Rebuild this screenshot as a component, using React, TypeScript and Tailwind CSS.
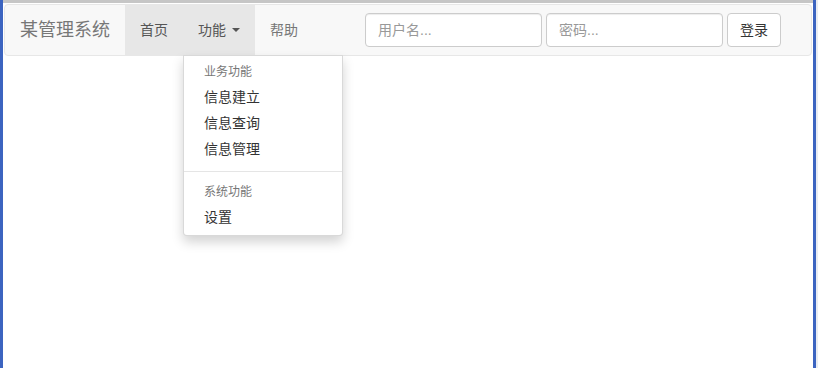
import React from "react";

const font = { fontFamily: '"Liberation Sans", "Noto Sans CJK SC", sans-serif' };

export default function App() {
  return (
    <div
      className="w-[818px] h-[368px] flex overflow-hidden bg-white text-[14px] leading-[20px] text-[#333]"
      style={font}
    >
      <div className="w-[3px] h-full bg-[#3c64c0] shrink-0" />
      <div className="flex-1 flex flex-col">
        <div className="h-[3px] bg-[#c6c6c6]" />
        <div className="flex-1 bg-white pt-[1px] px-[1px]">
          <nav className="relative h-[52px] flex items-stretch border border-[#e7e7e7] bg-[#f8f8f8] rounded-[4px]">
            <a className="h-[50px] px-[15px] py-[15px] text-[18px] leading-[20px] text-[#777]">
              某管理系统
            </a>
            <ul className="flex h-[50px]">
              <li>
                <a className="block h-[50px] px-[15px] py-[15px] bg-[#e7e7e7] text-[#555]">首页</a>
              </li>
              <li className="relative">
                <a className="flex items-center h-[50px] px-[15px] py-[15px] bg-[#e7e7e7] text-[#555]">
                  功能
                  <span className="ml-[6px] w-0 h-0 border-t-[4px] border-t-[#555] border-x-[4px] border-x-transparent" />
                </a>
                <div className="absolute left-0 top-[50px] w-[160px] py-[5px] bg-white border border-[rgba(0,0,0,0.15)] rounded-b-[4px] shadow-[0_6px_12px_rgba(0,0,0,0.175)] z-10">
                  <div className="px-[20px] py-[3px] text-[12px] leading-[17px] text-[#777]">业务功能</div>
                  <div className="px-[20px] py-[3px] text-[#333]">信息建立</div>
                  <div className="px-[20px] py-[3px] text-[#333]">信息查询</div>
                  <div className="px-[20px] py-[3px] text-[#333]">信息管理</div>
                  <div className="my-[9px] h-px bg-[#e5e5e5]" />
                  <div className="px-[20px] py-[3px] text-[12px] leading-[17px] text-[#777]">系统功能</div>
                  <div className="px-[20px] py-[3px] text-[#333]">设置</div>
                </div>
              </li>
              <li>
                <a className="block h-[50px] px-[15px] py-[15px] text-[#777]">帮助</a>
              </li>
            </ul>
            <div className="ml-auto flex gap-[4px] pt-[8px] pr-[30px]">
              <input
                className="w-[177px] h-[34px] px-[12px] border border-[#ccc] rounded-[4px] bg-white shadow-[inset_0_1px_1px_rgba(0,0,0,0.075)] text-[14px] placeholder:text-[#999] outline-none"
                placeholder="用户名..."
                style={font}
              />
              <input
                className="w-[177px] h-[34px] px-[12px] border border-[#ccc] rounded-[4px] bg-white shadow-[inset_0_1px_1px_rgba(0,0,0,0.075)] text-[14px] placeholder:text-[#999] outline-none"
                placeholder="密码..."
                style={font}
              />
              <button
                className="w-[54px] h-[34px] border border-[#ccc] rounded-[4px] bg-white text-[#333] text-[14px]"
                style={font}
              >
                登录
              </button>
            </div>
          </nav>
        </div>
      </div>
      <div className="w-[3px] h-full bg-[#3c64c0] shrink-0" />
      <div className="w-[2px] h-full bg-[#e8ecf2] shrink-0" />
    </div>
  );
}
